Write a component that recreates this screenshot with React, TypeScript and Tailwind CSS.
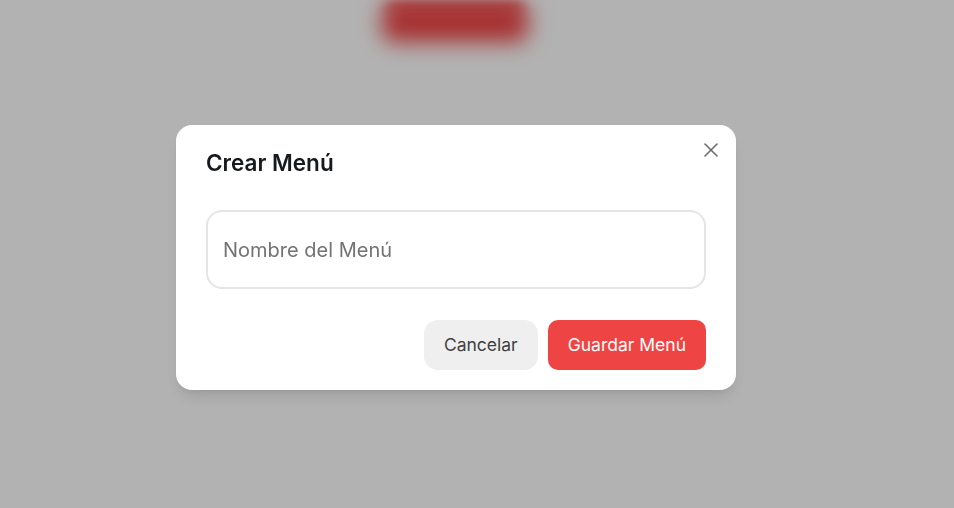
import { X } from "lucide-react";

export default function App() {
  return (
    <div className="relative h-[508px] w-full overflow-hidden bg-white font-['Inter',sans-serif]">
      {/* page behind the modal */}
      <div className="flex justify-center pr-[44px] pt-[2px]">
        <button className="h-[40px] w-[146px] rounded-xl bg-[#ef4444] text-white blur-[5px]"></button>
      </div>

      {/* overlay */}
      <div className="absolute inset-0 flex items-center justify-center bg-black/30 pt-[7px] pr-[42px] backdrop-blur-[10px]">
        <div className="relative w-[560px] rounded-2xl bg-white px-[30px] pt-6 pb-[20px] shadow-lg">
          <button className="absolute top-[13px] right-[13px] text-[#6b6b6b]">
            <X size={24} strokeWidth={1.6} />
          </button>
          <h2 className="text-[22.5px] leading-7 font-semibold text-[#16191d]">Crear Menú</h2>
          <input
            type="text"
            placeholder="Nombre del Menú"
            className="mt-[33px] h-[79px] w-full rounded-2xl border-2 border-[#e5e5e5] px-[15px] text-xl text-[#171717] outline-none placeholder:text-[#737373]"
          />
          <div className="mt-[31px] flex justify-end gap-[10px]">
            <button className="h-[50px] rounded-[14px] bg-[#efefef] px-5 text-[17.5px] text-[#404040]">
              Cancelar
            </button>
            <button className="h-[50px] rounded-[10px] bg-[#ef4444] px-5 text-[17.5px] text-white">
              Guardar Menú
            </button>
          </div>
        </div>
      </div>
    </div>
  );
}
